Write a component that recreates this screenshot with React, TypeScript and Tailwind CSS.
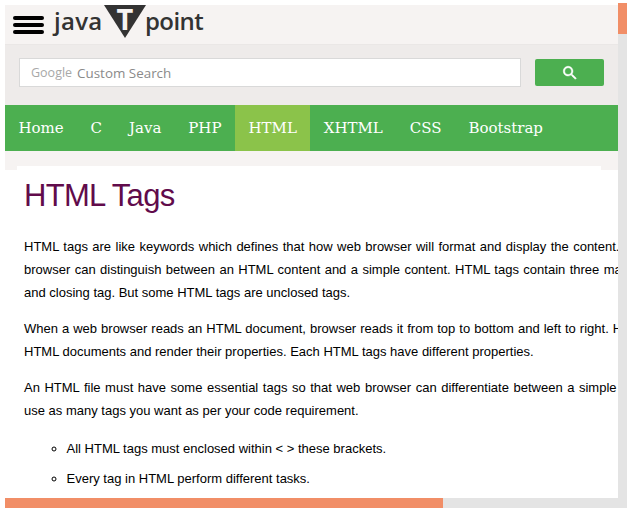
import React from "react";

const navItems = ["Home", "C", "Java", "PHP", "HTML", "XHTML", "CSS", "Bootstrap"];

// the source page justifies its text, so each full line carries its own word spacing
const paragraphs = [
  [
    { text: "HTML tags are like keywords which defines that how web browser will format and display the content. With the help of tags, a web", spacing: "[word-spacing:0.8px]" },
    { text: "browser can distinguish between an HTML content and a simple content. HTML tags contain three main parts: opening tag, content", spacing: "[word-spacing:0.8px]" },
    { text: "and closing tag. But some HTML tags are unclosed tags.", spacing: "" },
  ],
  [
    { text: "When a web browser reads an HTML document, browser reads it from top to bottom and left to right. HTML tags are used to create", spacing: "[word-spacing:0.4px]" },
    { text: "HTML documents and render their properties. Each HTML tags have different properties.", spacing: "" },
  ],
  [
    { text: "An HTML file must have some essential tags so that web browser can differentiate between a simple text and HTML text. You can", spacing: "[word-spacing:0.95px]" },
    { text: "use as many tags you want as per your code requirement.", spacing: "" },
  ],
];

const rules = ["All HTML tags must enclosed within < > these brackets.", "Every tag in HTML perform different tasks."];

export default function App() {
  return (
    <div className="flex h-[511px] w-[634px] overflow-hidden bg-white pt-[3px] font-['Liberation_Sans',sans-serif]">
      <div className="flex h-[505px] w-[618px] shrink-0 flex-col pl-[5px]">
        <div className="flex min-h-0 flex-1 flex-col overflow-hidden pt-[2px]">
          {/* Logo bar */}
          <header className="flex h-[40px] shrink-0 items-center border-b border-[#eae7e6] bg-[#f6f3f2] pl-[8px]">
            <div className="flex w-[31px] flex-col gap-[3px]">
              <span className="h-[4px] w-[31px] rounded-full bg-black" />
              <span className="h-[4px] w-[31px] rounded-full bg-black" />
              <span className="h-[4px] w-[31px] rounded-full bg-black" />
            </div>
            <div className="ml-[9px] flex h-full items-start text-[#333333]">
              <span className="-mt-[1px] w-[51px] pl-[1px] font-['Open_Sans',sans-serif] text-[24px] font-semibold leading-[34px] tracking-[0.3px]">java</span>
              <svg width="42" height="34" viewBox="0 0 42 34">
                <polygon points="0,0 42,0 21,33" fill="#333333" />
                <text x="21" y="25" textAnchor="middle" fontSize="29" fontWeight="700" fontFamily="Open Sans" fill="#f6f3f2">
                  T
                </text>
              </svg>
              <span className="-ml-[1px] -mt-[1px] font-['Open_Sans',sans-serif] text-[24px] font-semibold leading-[34px] tracking-[-0.6px]">point</span>
            </div>
          </header>

          {/* Search */}
          <div className="flex h-[60px] shrink-0 items-start gap-[14px] bg-[#eeebea] pl-[14px] pt-[13px]">
            <div className="flex h-[29px] w-[502px] items-center border border-[#d9d9d9] bg-white pl-[11px] pt-[1px] font-['Open_Sans',sans-serif]">
              <span className="text-[12.5px] text-[#a8a8a8]">Google</span>
              <span className="ml-[5px] text-[13.4px] text-[#8a8a8a]">Custom Search</span>
            </div>
            <button className="mt-[1px] flex h-[27px] w-[69px] items-center justify-center rounded-[2px] bg-[#4caf50]">
              <svg width="18" height="18" viewBox="0 0 24 24" fill="white" stroke="white" strokeWidth="0.6">
                <path d="M15.5 14h-.79l-.28-.27C15.41 12.59 16 11.11 16 9.5 16 5.91 13.09 3 9.5 3S3 5.91 3 9.5 5.91 16 9.5 16c1.61 0 3.09-.59 4.23-1.57l.27.28v.79l5 4.99L20.49 19l-4.99-5zm-6 0C7.01 14 5 11.99 5 9.5S7.01 5 9.5 5 14 7.01 14 9.5 11.99 14 9.5 14z" />
              </svg>
            </button>
          </div>

          {/* Nav */}
          <nav className="flex h-[46px] shrink-0 bg-[#4caf50] font-['DejaVu_Serif',serif] text-[15px] text-white">
            {navItems.map((item) => (
              <a key={item} className={`flex items-center px-[13.46px] ${item === "HTML" ? "bg-[#8bc34a]" : ""}`}>
                {item}
              </a>
            ))}
          </nav>

          {/* Content */}
          <div className="flex-1 bg-white">
            <div className="flex h-[19px] bg-[#f6f3f2]">
              <div className="mt-[15px] ml-[12px] h-[4px] w-[584px] bg-white" />
            </div>
            <main className="pl-[19px] text-[13px] text-black">
              <h1 className="mt-[8px] text-[31px] leading-[36px] tracking-[-0.7px] text-[#610b4b]">HTML Tags</h1>
              <div className="pt-[8.5px]">
                {paragraphs.map((lines, i) => (
                  <p key={i} className="mt-[12px] whitespace-nowrap leading-[23.4px]">
                    {lines.map((line) => (
                      <span key={line.text} className={`block ${line.spacing}`}>
                        {line.text}
                      </span>
                    ))}
                  </p>
                ))}
              </div>
              <ul className="mt-[16.2px] list-[circle] pl-[42.5px] leading-[20px]">
                {rules.map((rule) => (
                  <li key={rule} className="mb-[10px]">
                    {rule}
                  </li>
                ))}
              </ul>
            </main>
          </div>
        </div>

        {/* Horizontal scrollbar */}
        <div className="h-[10px] shrink-0 bg-[#e4e4e4]">
          <div className="h-full w-[438px] bg-[#f18e67]" />
        </div>
      </div>

      {/* Vertical scrollbar */}
      <div className="h-[505px] w-[9px] shrink-0 bg-[#e4e4e4]">
        <div className="h-[31px] w-full bg-[#f18e67]" />
      </div>
    </div>
  );
}
